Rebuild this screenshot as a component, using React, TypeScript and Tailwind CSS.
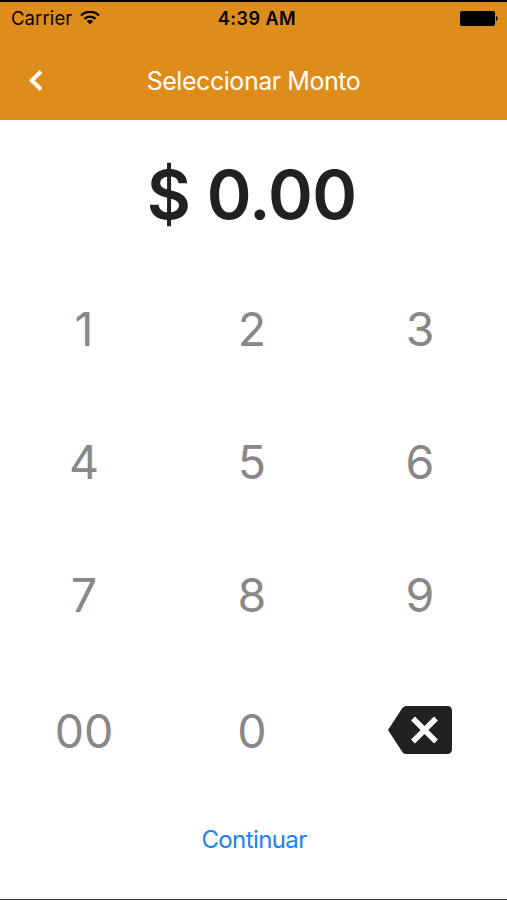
import React from 'react';

const keys = ['1', '2', '3', '4', '5', '6', '7', '8', '9', '00', '0'];

const StatusBar: React.FC = () => (
  <div className="grid grid-cols-3 items-center h-[32px] pl-[11px] pr-[9px] text-black">
    <div className="flex gap-[8px] items-center pt-[1px] text-[18.5px]">
      <span className="tracking-[0.1px]">Carrier</span>
      <svg width="20" height="15" viewBox="0 0 20 15" fill="none" stroke="currentColor" strokeWidth="2.400">
        <path d="M1 4.500C6-.3 14-.3 19 4.500" />
        <path d="M4.500 7.900c3-3 8-3 11 0" />
        <path d="M10 13.500l-3.100-3.200c1.800-1.600 4.400-1.600 6.200 0z" fill="currentColor" stroke="none" />
      </svg>
    </div>
    <div className="pl-[5px] text-[18px] font-semibold tracking-[0.5px] text-center whitespace-nowrap">
      4:39 AM
    </div>
    <div className="flex justify-end items-center">
      <svg width="39" height="15" viewBox="0 0 39 15">
        <rect x="1" y="0" width="35" height="15" rx="2" fill="currentColor" />
        <path d="M37 5c2.200 1 2.200 4 0 5z" fill="currentColor" />
      </svg>
    </div>
  </div>
);

const App: React.FC = () => {
  return (
    <div className="flex flex-col h-[900px] w-[507px] overflow-hidden bg-white border-b border-[#333] font-[Inter,sans-serif]">
      <header className="h-[120px] shrink-0 bg-[#de8c1a] border-t-2 border-black">
        <StatusBar />
        <div className="grid grid-cols-[70px_1fr_70px] items-center h-[93px] text-white">
          <button className="pl-[28px]">
            <svg width="16" height="24" viewBox="0 0 16 24" fill="none" stroke="currentColor" strokeWidth="4">
              <path d="M13 2.500L3.800 11.500l9.200 9" />
            </svg>
          </button>
          <h1 className="pt-[2px] text-[25px] tracking-[-0.45px] text-center whitespace-nowrap">Seleccionar Monto</h1>
        </div>
      </header>

      {/* Amount */}
      <div className="flex justify-center items-center w-[503px] h-[148px] pb-[1px] text-[68px] font-semibold tracking-[-0.7px] text-[#212121]">
        $ 0.00
      </div>

      {/* Keypad */}
      <div className="grid grid-cols-3 grid-rows-[124px_142px_124px_147px] w-[504px] text-[46.500px] text-[#888]">
        {keys.map((key) => (
          <button key={key}>{key}</button>
        ))}
        <button className="flex justify-center items-center pb-[3px] text-[#212121]">
          <svg width="64" height="48" viewBox="0 0 64 48">
            <path d="M18 0h41q5 0 5 5v38q0 5-5 5H18q-2.500 0-4-2.500L0 24 14 2.500Q15.500 0 18 0z" fill="currentColor" />
            <path d="M25 12.500l23 23M48 12.500l-23 23" stroke="white" strokeWidth="5.500" />
          </svg>
        </button>
      </div>

      <button className="mt-[17px] w-[508px] text-[24px] tracking-[-0.6px] text-[#1a82f7]">Continuar</button>
    </div>
  );
};

export default App;
